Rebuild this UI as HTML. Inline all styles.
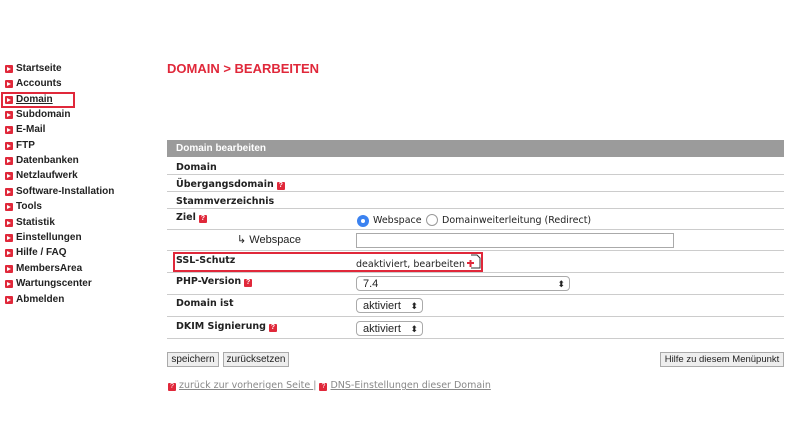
<!DOCTYPE html><html><head><style>
body{margin:0;width:795px;height:447px;background:#fff;font-family:"Liberation Sans",Arial,sans-serif;position:relative;overflow:hidden;color:#222}
.a{position:absolute;white-space:nowrap}
.nav{font-size:10px;font-weight:bold;left:16px;line-height:12px}
.ic{position:absolute;width:8px;height:8px;background:#e0283a;border-radius:1px}
.ic:after{content:"";position:absolute;left:2px;top:2px;border-left:4px solid #fff;border-top:2px solid transparent;border-bottom:2px solid transparent}
.q{display:inline-block;width:8px;height:8px;background:#e0283a;border-radius:1px;color:#fff;font-size:7px;line-height:8px;text-align:center;vertical-align:0px;margin-left:3px;font-family:"Liberation Sans",sans-serif}
.lbl{left:176px;font-size:9.5px;font-weight:bold;font-family:"DejaVu Sans",sans-serif}
.line{left:167px;width:617px;height:1px;background:#ccc}
.sel{border:1px solid #aaa;border-radius:4px;background:#fff;font-size:11px;height:15px;line-height:14px;padding-left:6px;box-sizing:border-box}
.sel:after{content:"⬍";position:absolute;right:4px;top:0;font-size:9px}
.btn{border:1px solid #aaa;background:#eee;font-size:10px;height:15px;line-height:13px;padding:0 2px;box-sizing:border-box}
.v{font-size:9.5px;font-family:"DejaVu Sans",sans-serif}
</style></head><body>
<div class="a" style="left:167px;top:61px;font-size:13px;font-weight:bold;color:#e0283a">DOMAIN &gt; BEARBEITEN</div>

<div class="ic" style="left:5px;top:65px"></div><div class="a nav" style="top:63px">Startseite</div>
<div class="ic" style="left:5px;top:80px"></div><div class="a nav" style="top:78px">Accounts</div>
<div class="ic" style="left:5px;top:96px"></div><div class="a nav" style="top:94px;text-decoration:underline">Domain</div>
<div class="a" style="left:1px;top:92px;width:74px;height:16px;border:2px solid #e0283a;box-sizing:border-box"></div>
<div class="ic" style="left:5px;top:111px"></div><div class="a nav" style="top:109px">Subdomain</div>
<div class="ic" style="left:5px;top:126px"></div><div class="a nav" style="top:124px">E-Mail</div>
<div class="ic" style="left:5px;top:142px"></div><div class="a nav" style="top:140px">FTP</div>
<div class="ic" style="left:5px;top:157px"></div><div class="a nav" style="top:155px">Datenbanken</div>
<div class="ic" style="left:5px;top:172px"></div><div class="a nav" style="top:170px">Netzlaufwerk</div>
<div class="ic" style="left:5px;top:188px"></div><div class="a nav" style="top:186px">Software-Installation</div>
<div class="ic" style="left:5px;top:203px"></div><div class="a nav" style="top:201px">Tools</div>
<div class="ic" style="left:5px;top:219px"></div><div class="a nav" style="top:217px">Statistik</div>
<div class="ic" style="left:5px;top:234px"></div><div class="a nav" style="top:232px">Einstellungen</div>
<div class="ic" style="left:5px;top:249px"></div><div class="a nav" style="top:247px">Hilfe / FAQ</div>
<div class="ic" style="left:5px;top:265px"></div><div class="a nav" style="top:263px">MembersArea</div>
<div class="ic" style="left:5px;top:280px"></div><div class="a nav" style="top:278px">Wartungscenter</div>
<div class="ic" style="left:5px;top:296px"></div><div class="a nav" style="top:294px">Abmelden</div>

<div class="a" style="left:167px;top:140px;width:617px;height:17px;background:#9b9b9b;color:#fff;font-size:10px;font-weight:bold;line-height:17px;text-indent:9px">Domain bearbeiten</div>
<div class="a lbl" style="top:162px">Domain</div><div class="a line" style="top:174px"></div>
<div class="a lbl" style="top:179px">Übergangsdomain<span class="q">?</span></div><div class="a line" style="top:191px"></div>
<div class="a lbl" style="top:196px">Stammverzeichnis</div><div class="a line" style="top:208px"></div>
<div class="a lbl" style="top:212px">Ziel<span class="q">?</span></div>
<div class="a" style="left:357px;top:215px;width:12px;height:12px;border-radius:50%;background:#3b82f0"><div class="a" style="left:4px;top:4px;width:4px;height:4px;border-radius:50%;background:#fff"></div></div>
<div class="a v" style="left:373px;top:215px">Webspace</div>
<div class="a" style="left:426px;top:214px;width:12px;height:12px;border-radius:50%;border:1px solid #999;box-sizing:border-box"></div>
<div class="a v" style="left:442px;top:215px">Domainweiterleitung (Redirect)</div>
<div class="a line" style="top:229px"></div>
<div class="a" style="left:237px;top:233px;font-size:11px">↳ Webspace</div>
<div class="a" style="left:356px;top:233px;width:318px;height:15px;border:1px solid #aaa;box-sizing:border-box"></div>
<div class="a line" style="top:250px"></div>
<div class="a" style="left:173px;top:252px;width:310px;height:20px;border:2px solid #e0283a;box-sizing:border-box"></div>
<div class="a lbl" style="top:255px">SSL-Schutz</div>
<div class="a v" style="left:356px;top:259px">deaktiviert, bearbeiten</div>
<svg class="a" style="left:466px;top:254px" width="16" height="15"><path d="M5 1h6l3 3v10H5" fill="none" stroke="#333" stroke-width="1"/><path d="M1 9h7M4.5 6v7" stroke="#e0283a" stroke-width="2"/></svg>
<div class="a line" style="top:272px"></div>
<div class="a lbl" style="top:276px">PHP-Version<span class="q">?</span></div>
<div class="a sel" style="left:356px;top:276px;width:214px">7.4</div>
<div class="a line" style="top:294px"></div>
<div class="a lbl" style="top:298px">Domain ist</div>
<div class="a sel" style="left:356px;top:298px;width:67px">aktiviert</div>
<div class="a line" style="top:316px"></div>
<div class="a lbl" style="top:321px">DKIM Signierung<span class="q">?</span></div>
<div class="a sel" style="left:356px;top:321px;width:67px">aktiviert</div>
<div class="a line" style="top:338px"></div>

<div class="a btn" style="left:167px;top:352px;width:52px;text-align:center">speichern</div>
<div class="a btn" style="left:223px;top:352px;width:66px;text-align:center">zurücksetzen</div>
<div class="a btn" style="left:660px;top:352px;width:124px;text-align:center;font-size:9.5px">Hilfe zu diesem Menüpunkt</div>

<div class="a v" style="left:168px;top:380px;color:#888"><span class="q" style="margin:0 3px 0 0">?</span><u>zurück zur vorherigen Seite </u> | <span class="q" style="margin:0 3px 0 0">?</span><u>DNS-Einstellungen dieser Domain</u></div>
</body></html>
